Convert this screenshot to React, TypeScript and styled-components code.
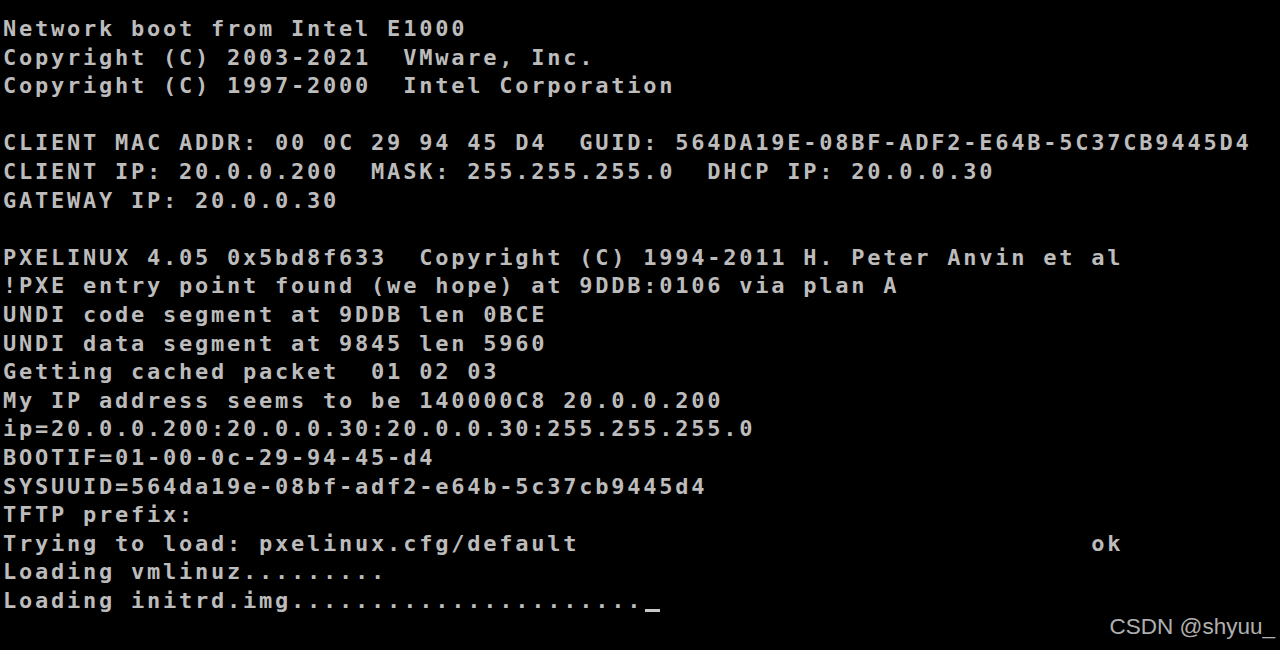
import styled, { createGlobalStyle } from 'styled-components';

const GlobalStyle = createGlobalStyle`
    html, body {
        margin: 0;
        padding: 0;
        background: #000;
    }
`;

const StyledScreen = styled.div`
    position: relative;
    width: 1280px;
    height: 650px;
    overflow: hidden;
    background-color: #000;
`;

const StyledConsole = styled.div`
    display: flex;
    flex-direction: column;
    padding: 15px 0 0 3px;
    font-family: 'DejaVu Sans Mono', 'Liberation Mono', monospace;
    font-weight: 700;
    font-size: 22px;
    letter-spacing: 2.76px;
    color: #bcbcbc;
`;

const StyledLine = styled.div`
    height: 28.6px;
    line-height: 28.6px;
    white-space: pre;
`;

const StyledCursor = styled.span`
    display: inline-block;
    width: 15px;
    height: 3px;
    margin-left: 2px;
    margin-bottom: -4px;
    vertical-align: baseline;
    background-color: #c8c8c8;
`;

const StyledWatermark = styled.div`
    position: absolute;
    right: 5px;
    bottom: 10px;
    font-family: 'Liberation Sans', Arial, sans-serif;
    font-size: 22.5px;
    color: rgba(255, 255, 255, 0.7);
`;

const lines = [
    'Network boot from Intel E1000',
    'Copyright (C) 2003-2021  VMware, Inc.',
    'Copyright (C) 1997-2000  Intel Corporation',
    '',
    'CLIENT MAC ADDR: 00 0C 29 94 45 D4  GUID: 564DA19E-08BF-ADF2-E64B-5C37CB9445D4',
    'CLIENT IP: 20.0.0.200  MASK: 255.255.255.0  DHCP IP: 20.0.0.30',
    'GATEWAY IP: 20.0.0.30',
    '',
    'PXELINUX 4.05 0x5bd8f633  Copyright (C) 1994-2011 H. Peter Anvin et al',
    '!PXE entry point found (we hope) at 9DDB:0106 via plan A',
    'UNDI code segment at 9DDB len 0BCE',
    'UNDI data segment at 9845 len 5960',
    'Getting cached packet  01 02 03',
    'My IP address seems to be 140000C8 20.0.0.200',
    'ip=20.0.0.200:20.0.0.30:20.0.0.30:255.255.255.0',
    'BOOTIF=01-00-0c-29-94-45-d4',
    'SYSUUID=564da19e-08bf-adf2-e64b-5c37cb9445d4',
    'TFTP prefix:',
    'Trying to load: pxelinux.cfg/default' + ' '.repeat(32) + 'ok',
    'Loading vmlinuz.........',
];

export default function App() {
    return (
        <>
            <GlobalStyle />
            <StyledScreen>
                <StyledConsole>
                    {lines.map((text, i) => (
                        <StyledLine key={i}>{text}</StyledLine>
                    ))}
                    <StyledLine>
                        {'Loading initrd.img' + '.'.repeat(22)}
                        <StyledCursor />
                    </StyledLine>
                </StyledConsole>
                <StyledWatermark>CSDN @shyuu_</StyledWatermark>
            </StyledScreen>
        </>
    );
}
